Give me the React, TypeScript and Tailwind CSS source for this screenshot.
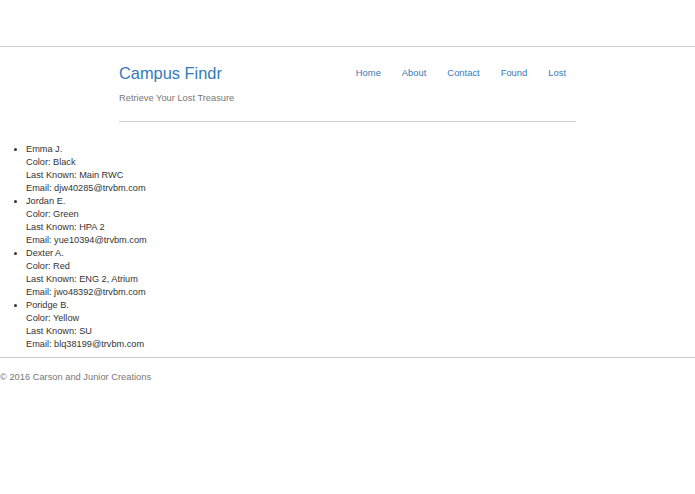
const people = [
  { name: "Emma J.", color: "Black", last: "Main RWC", email: "djw40285@trvbm.com" },
  { name: "Jordan E.", color: "Green", last: "HPA 2", email: "yue10394@trvbm.com" },
  { name: "Dexter A.", color: "Red", last: "ENG 2, Atrium", email: "jwo48392@trvbm.com" },
  { name: "Poridge B.", color: "Yellow", last: "SU", email: "blq38199@trvbm.com" },
];

const links = ["Home", "About", "Contact", "Found", "Lost"];

export default function App() {
  return (
    <div className="min-h-[494px] bg-white pt-[46px] font-['Liberation_Sans',Arial,sans-serif] text-[#333]">
      <header className="border-t border-[#ccc]">
        <div className="ml-[119px] w-[457px] border-b border-[#ccc] pb-[16px]">
          <div className="flex items-center justify-between pt-[16px]">
            <h1 className="text-[16.4px] leading-[20px] text-[#337ab7]">Campus Findr</h1>
            <nav className="flex">
              {links.map((l) => (
                <a key={l} href="#" className="px-[10.5px] text-[9.4px] leading-[20px] text-[#337ab7] last:pr-[10px]">
                  {l}
                </a>
              ))}
            </nav>
          </div>
          <p className="mt-[9px] text-[9.3px] leading-[13px] text-[#777]">Retrieve Your Lost Treasure</p>
        </div>
      </header>

      <ul className="mt-[21px] list-disc pl-[26px] text-[9.2px] leading-[13px]">
        {people.map((p) => (
          <li key={p.name}>
            {p.name}
            <br />
            Color: {p.color}
            <br />
            Last Known: {p.last}
            <br />
            Email: {p.email}
          </li>
        ))}
      </ul>

      <footer className="mt-[6px] border-t border-[#ccc] pt-[13px]">
        <p className="text-[9.3px] leading-[13px] text-[#777]">© 2016 Carson and Junior Creations</p>
      </footer>
    </div>
  );
}
